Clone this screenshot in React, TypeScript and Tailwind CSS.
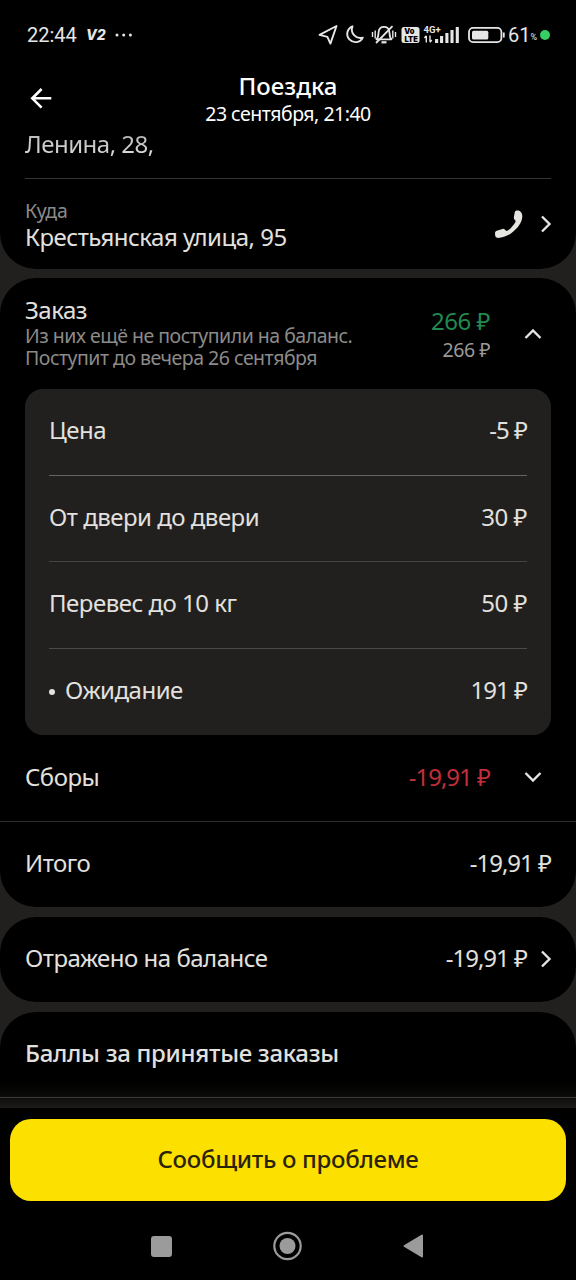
import type { ReactNode } from "react";

const orderItems = [
  { label: "Цена", value: "-5 ₽", line: "border-[#66645f]", labelClass: "tracking-[-0.5px]", valueClass: "tracking-[-1px]" },
  { label: "От двери до двери", value: "30 ₽", line: "border-[#454441]", labelClass: "tracking-[-0.5px]", valueClass: "tracking-[-0.5px]" },
  { label: "Перевес до 10 кг", value: "50 ₽", line: "border-[#4b4a47]", labelClass: "tracking-[-0.5px]", valueClass: "tracking-[-0.5px]" },
  { label: "Ожидание", value: "191 ₽", bullet: true, line: "border-transparent", labelClass: "tracking-[-0.5px]", valueClass: "tracking-[-1px]" },
];

function Chevron({ className }: { className?: string }) {
  return (
    <svg viewBox="0 0 20 20" className={`size-5 shrink-0 ${className ?? ""}`} fill="none" stroke="#e4e4e2" strokeWidth="2.4">
      <path d="M6 2.5 L13.5 10 L6 17.5" />
    </svg>
  );
}

function StatusBar() {
  return (
    <div className="flex h-[70px] items-center pl-[27px] pr-[26px] text-[#e6e6e6]">
      <span className="w-[50px] whitespace-nowrap font-['Roboto'] text-[20px] leading-none">22:44</span>
      <span className="ml-[9px] font-['Inter'] text-[14px] font-extrabold italic leading-none">V2</span>
      <svg viewBox="0 0 18 4" className="ml-[9px] h-1 w-[18px]" fill="currentColor">
        <circle cx="2" cy="2" r="1.5" />
        <circle cx="8.7" cy="2" r="1.5" />
        <circle cx="15.4" cy="2" r="1.5" />
      </svg>

      <svg viewBox="0 0 188 26" className="ml-auto h-[26px] w-[188px] shrink-0" fill="none" stroke="currentColor">
        {/* Location */}
        <path d="M1.5 12.8 L18.5 4 L12.4 21.6 L9.4 14.8 Z" strokeWidth="1.9" strokeLinejoin="round" />
        {/* Moon */}
        <path d="M34.5 4.3 A8.2 8.2 0 1 0 44.8 15.6 A8.5 8.5 0 0 1 34.5 4.3 Z" strokeWidth="1.9" strokeLinejoin="round" />
        {/* Muted bell */}
        <g strokeWidth="1.8">
          <path d="M58.5 17.3 C60.6 15.6 60.3 12.5 60.6 10 C61 6.6 63.3 4.8 66 4.8 C68.7 4.8 71 6.6 71.4 10 C71.7 12.5 71.4 15.6 73.5 17.3 Z" strokeLinejoin="round" />
          <path d="M63.5 20.3 H68.5" strokeWidth="2.2" />
          <path d="M58 21 L74.5 4.2" />
          <path d="M54.5 10 V15 M57.2 8.5 V16.5 M74.8 8.5 V16.5 M77.5 10 V15" strokeWidth="1.4" />
        </g>
        {/* VoLTE */}
        <rect x="83.5" y="5" width="18" height="16" rx="2.5" fill="currentColor" stroke="none" />
        <text x="86.3" y="12.4" className="font-['Inter'] text-[7.5px] font-black" fill="#000" stroke="none">Vo</text>
        <text x="86.5" y="19.7" className="font-['Inter'] text-[7.5px] font-black" fill="#000" stroke="none">LTE</text>
        {/* Mobile signal */}
        <text x="105.5" y="10.6" className="font-['Roboto'] text-[9.5px] font-bold" fill="currentColor" stroke="none">4G+</text>
        <path d="M108.3 20.5 V14 M106.5 16 L108.3 13.8 M112 13.5 V20 M113.7 18 L112 20.2" strokeWidth="1.4" />
        <path d="M118.6 21 V17 M123.6 21 V14 M128.9 21 V11 M134 21 V8 M139.3 21 V5" strokeWidth="3.1" />
      </svg>
      <svg viewBox="0 0 38 18" className="ml-[-38px] h-[18px] w-[38px] shrink-0" fill="none" stroke="currentColor">
        <rect x="1" y="1.8" width="32.4" height="14.4" rx="4.2" strokeWidth="1.8" />
        <rect x="4" y="4.8" width="16.3" height="8.6" rx="1.5" fill="currentColor" stroke="none" />
        <path d="M35.8 6.5 V11.5" strokeWidth="1.8" />
      </svg>
      <span className="ml-[2px] whitespace-nowrap font-['Roboto'] text-[20px] leading-none">61</span>
      <span className="mt-[5px] font-['Roboto'] text-[9px] leading-none">%</span>
      <span className="ml-[3px] size-[10px] shrink-0 rounded-full bg-[#36cf63]" />
    </div>
  );
}

function Card({ children, className }: { children: ReactNode; className?: string }) {
  return <section className={`rounded-[36px] bg-black ${className ?? ""}`}>{children}</section>;
}

export default function App() {
  return (
    <div className="flex h-[1280px] w-[576px] flex-col overflow-hidden bg-[#21201f] font-['Noto_Sans',sans-serif] text-[24px] leading-[30px] text-[#e2e1df]">
      <div className="h-[269px] shrink-0 rounded-b-[36px] bg-black">
        <StatusBar />
        <header className="grid h-[58px] grid-cols-[80px_1fr_80px]">
          <svg viewBox="0 0 24 24" className="ml-[29px] mt-[16px] size-6" fill="none" stroke="#fff" strokeWidth="2.6">
            <path d="M22.3 12.3 H3.5 M12.6 3 L3.3 12.3 L12.6 21.6" />
          </svg>
          <div className="text-center text-white">
            <h1 className="mt-px font-medium tracking-[0px]">Поездка</h1>
            <p className="text-[19.5px] leading-[26px] tracking-[-0.5px]">23 сентября, 21:40</p>
          </div>
        </header>
        <div className="mx-[25px] h-[51px] border-b border-[#343434]">
          <p className="bg-gradient-to-b from-[#b0b0b0] to-[#e2e1df] bg-clip-text pt-px tracking-[-0.5px] text-transparent">Ленина, 28,</p>
        </div>
        <div className="flex h-[90px] items-center pl-[25px] pr-5">
          <div>
            <p className="text-[19.5px] leading-[26px] tracking-[-0.3px] text-[#8c8b89]">Куда</p>
            <p className="leading-[26px] tracking-[-0.5px]">Крестьянская улица, 95</p>
          </div>
          <svg viewBox="0 0 28 28" className="ml-auto size-7" fill="#e7e5e1">
            <path d="M21 .8 C23.8-.2 27.5 1.8 27.3 6.5 C27.1 12.5 22.5 18.5 16.5 23 C12 26.4 6 28.3 2 27.8 C.3 27.6-.2 25 .1 22.5 C.2 21.5.8 21 1.8 20.7 L7.5 18.9 C8.8 18.5 9.8 19.4 10.7 20.6 C11.2 21.3 12 21.2 12.8 20.6 C16 18.2 18.5 15.3 20.3 12.2 C20.8 11.3 20.6 10.7 19.9 10.1 C18.9 9.2 18.7 8.3 18.9 7.1 L19.7 2.6 C19.9 1.6 20.2 1.1 21 .8 Z" />
          </svg>
          <Chevron className="ml-[13px]" />
        </div>
      </div>

      <Card className="mt-[9px] h-[629px] shrink-0">
        <div className="flex h-[111px] pl-[25px] pr-[33px]">
          <div className="pt-[17px]">
            <h2 className="tracking-[-0.5px]">Заказ</h2>
            <p className="whitespace-nowrap text-[19.5px] leading-[22px] tracking-[-0.5px] text-[#8c8b89]">
              Из них ещё не поступили на баланс.
              <br />
              Поступит до вечера 26 сентября
            </p>
          </div>
          <div className="ml-auto pt-[28px] text-right">
            <p className="tracking-[-0.5px] text-[#22894f]">266 ₽</p>
            <p className="text-[19.5px] leading-[28px] tracking-[-0.5px] text-[#9a9997]">266 ₽</p>
          </div>
          <Chevron className="ml-[33px] mt-[46px] -rotate-90" />
        </div>

        <div className="mx-[25px] h-[346px] rounded-[18px] bg-[#21201f] px-6">
          {orderItems.map((item) => (
            <div key={item.label} className={`flex h-[86.5px] items-center justify-between border-b pb-[3px] ${item.line}`}>
              <span className={`flex items-center ${item.labelClass}`}>
                {item.bullet && <i className="mr-[10px] mt-1 size-[6px] rounded-full bg-[#e2e1df]" />}
                {item.label}
              </span>
              <span className={item.valueClass}>{item.value}</span>
            </div>
          ))}
        </div>

        <div className="flex h-[87px] items-center border-b border-[#2b2b2b] pb-[3px] pl-[25px] pr-[33px]">
          <span className="tracking-[-0.5px]">Сборы</span>
          <span className="ml-auto tracking-[-1px] text-[#c22e3a]">-19,91 ₽</span>
          <Chevron className="ml-[33px] rotate-90" />
        </div>
        <div className="flex h-[82px] items-center justify-between px-[25px]">
          <span className="tracking-[-0.5px]">Итого</span>
          <span className="tracking-[-1px]">-19,91 ₽</span>
        </div>
      </Card>

      <Card className="mt-[9.5px] flex h-[85.5px] shrink-0 items-center pb-[3px] pl-[25px] pr-5">
        <span className="tracking-[-0.5px]">Отражено на балансе</span>
        <span className="ml-auto tracking-[-1px]">-19,91 ₽</span>
        <Chevron className="ml-[9px] mt-[3px]" />
      </Card>

      <section className="mt-[9.5px] flex h-[96.5px] shrink-0 flex-col rounded-t-[36px] bg-gradient-to-b from-black from-60% to-[#1c1b19]">
        <h2 className="h-[86px] border-b border-[#3a3936] pl-[25px] pt-[26px] font-medium tracking-[-0.3px]">Баллы за принятые заказы</h2>
      </section>

      <footer className="h-[172px] shrink-0 bg-black px-[10px] pt-[11px]">
        <button className="block h-[82px] w-full rounded-[21px] bg-[#fce000] pb-[2px] text-center font-medium tracking-[-0.3px] text-[#2b2308]">
          Сообщить о проблеме
        </button>
        <nav className="mt-[30px] flex h-[30px] items-center pl-[141px]">
          <span className="size-[21px] rounded-[3px] bg-[#9b9b9b]" />
          <svg viewBox="0 0 30 30" className="ml-[100px] size-[30px]">
            <circle cx="15.5" cy="15" r="13.2" fill="none" stroke="#9b9b9b" strokeWidth="2.2" />
            <circle cx="15.5" cy="15" r="8" fill="#9b9b9b" />
          </svg>
          <svg viewBox="0 0 22 26" className="ml-[100px] h-[26px] w-[22px]" fill="#9b9b9b" stroke="#9b9b9b" strokeWidth="2" strokeLinejoin="round">
            <path d="M2.5 13 L20 2.5 V23.5 Z" />
          </svg>
        </nav>
      </footer>
    </div>
  );
}
